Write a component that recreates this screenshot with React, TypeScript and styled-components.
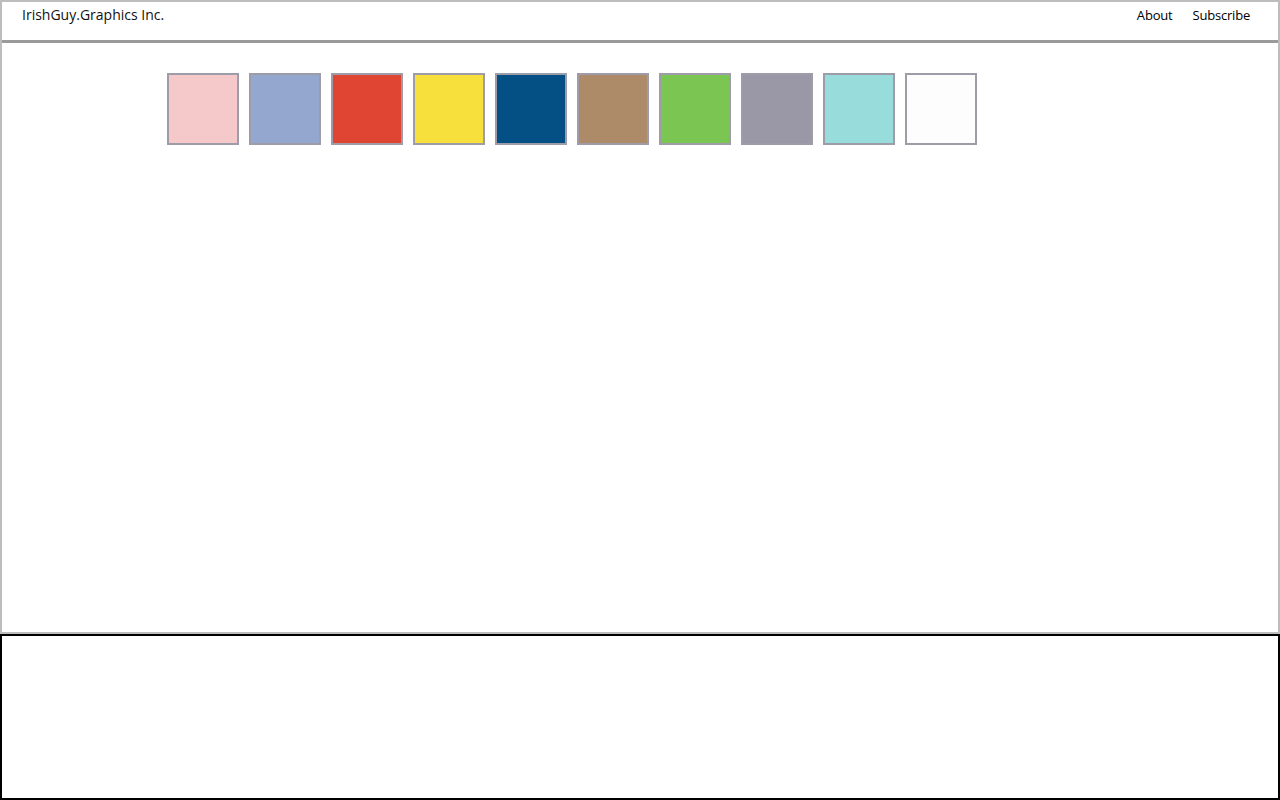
import React from 'react';
import styled, { createGlobalStyle } from 'styled-components';

const GlobalStyle = createGlobalStyle`
  html, body {
    margin: 0;
    padding: 0;
    background: #ffffff;
  }
  body {
    font-family: "Open Sans", "Noto Sans", "Liberation Sans", sans-serif;
    color: #111111;
  }
  * {
    box-sizing: border-box;
  }
`;

const Frame = styled.div`
  height: 634px;
  border: 2px solid #bdbdbd;
  display: flex;
  flex-direction: column;
`;

const Header = styled.header`
  height: 41px;
  border-bottom: 3px solid #9a9a9a;
  display: flex;
  align-items: flex-start;
  justify-content: space-between;
  padding: 4px 28px 0 20px;
`;

const Brand = styled.div`
  font-size: 14px;
  line-height: 18px;
  letter-spacing: 0;
`;

const Nav = styled.nav`
  display: flex;
  gap: 20px;
`;

const NavLink = styled.a`
  font-size: 13px;
  line-height: 18px;
  color: #000000;
  text-decoration: none;
  letter-spacing: -0.2px;
`;

const Swatches = styled.div`
  display: flex;
  gap: 10px;
  padding: 30px 0 0 165px;
`;

const Swatch = styled.div<{ $color: string }>`
  width: 72px;
  height: 72px;
  background: ${(p) => p.$color};
  border: 2px solid #9f9caa;
`;

const Footer = styled.footer`
  height: 166px;
  border: 2px solid #000000;
`;

const colors = [
  '#f5c8c9',
  '#94a8cf',
  '#e04433',
  '#f8e03c',
  '#044f84',
  '#ae8b68',
  '#7bc653',
  '#9a98a7',
  '#98dcdc',
  '#fdfdfd',
];

export const App: React.FunctionComponent = () => (
  <>
    <GlobalStyle />
    <Frame>
      <Header>
        <Brand>IrishGuy.Graphics Inc.</Brand>
        <Nav>
          <NavLink href="#">About</NavLink>
          <NavLink href="#">Subscribe</NavLink>
        </Nav>
      </Header>
      <Swatches>
        {colors.map((c) => (
          <Swatch key={c} $color={c} />
        ))}
      </Swatches>
    </Frame>
    <Footer />
  </>
);

export default App;
